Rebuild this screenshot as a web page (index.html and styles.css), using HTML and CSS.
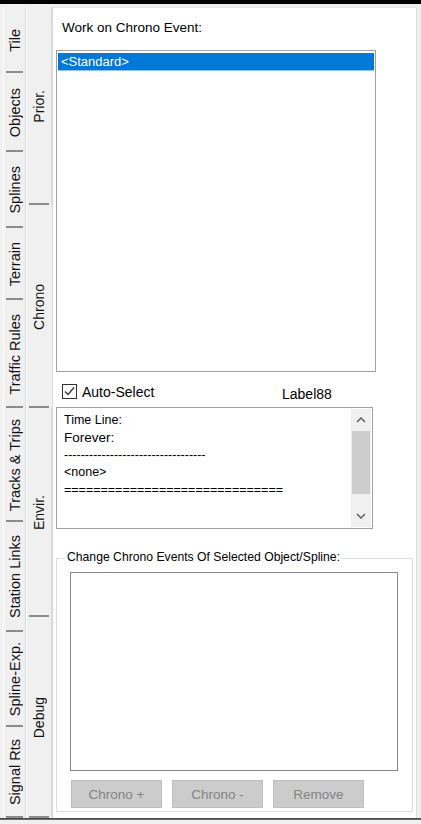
FILE: index.html
```html
<!DOCTYPE html>
<html>
<head>
<meta charset="utf-8">
<link rel="stylesheet" href="styles.css">
</head>
<body>
<div class="topbar"></div>
<div class="window">
  <div class="tabs outer">
    <div class="tab o1"><span>Tile</span></div>
    <div class="tab o2"><span>Objects</span></div>
    <div class="tab o3"><span>Splines</span></div>
    <div class="tab o4"><span>Terrain</span></div>
    <div class="tab o5"><span>Traffic Rules</span></div>
    <div class="tab o6"><span>Tracks &amp; Trips</span></div>
    <div class="tab o7"><span>Station Links</span></div>
    <div class="tab o8"><span>Spline-Exp.</span></div>
    <div class="tab o9 last"><span>Signal Rts</span></div>
  </div>
  <div class="tabs inner">
    <div class="tab i1"><span>Prior.</span></div>
    <div class="tab i2 selected"><span>Chrono</span></div>
    <div class="tab i3"><span>Envir.</span></div>
    <div class="tab i4 last"><span>Debug</span></div>
  </div>
  <div class="panel">
    <div class="caption">Work on Chrono Event:</div>
    <div class="listbox">
      <div class="item selected">&lt;Standard&gt;</div>
    </div>
    <div class="checkrow">
      <div class="check">
        <span class="checkbox"><svg width="13" height="13" viewBox="0 0 13 13"><path d="M2 6.5 L5 9.5 L11 2.5" fill="none" stroke="#333" stroke-width="1.3"/></svg></span>
        <span class="chk-label">Auto-Select</span>
      </div>
      <span class="label88">Label88</span>
    </div>
    <div class="memo">
      <div class="memo-text">
        <div>Time Line:</div>
        <div class="wide">Forever:</div>
        <div>----------------------------------</div>
        <div>&lt;none&gt;</div>
        <div>==============================</div>
      </div>
      <div class="scrollbar">
        <div class="sb-btn"><svg width="10" height="6" viewBox="0 0 10 6"><path d="M1 5 L5 1 L9 5" fill="none" stroke="#606060" stroke-width="1.5"/></svg></div>
        <div class="sb-track"><div class="sb-thumb"></div></div>
        <div class="sb-btn"><svg width="10" height="6" viewBox="0 0 10 6"><path d="M1 1 L5 5 L9 1" fill="none" stroke="#606060" stroke-width="1.5"/></svg></div>
      </div>
    </div>
    <fieldset class="group">
      <legend>Change Chrono Events Of Selected Object/Spline:</legend>
      <div class="listbox2"></div>
      <div class="buttons">
        <button class="btn" disabled>Chrono +</button>
        <button class="btn" disabled>Chrono -</button>
        <button class="btn" disabled>Remove</button>
      </div>
    </fieldset>
  </div>
</div>
<div class="bottombar"></div>
</body>
</html>
```
FILE: styles.css
```css
html, body {
  margin: 0;
  padding: 0;
}
body {
  background: #f0f0f0;
  font-family: "Liberation Sans", Arial, sans-serif;
  font-size: 12.5px;
  color: #000;
  width: 421px;
  height: 824px;
  overflow: hidden;
}
.topbar {
  height: 4px;
  background: #000;
}
.window {
  display: flex;
  padding: 3px 0 0 3px;
  height: 811px;
}
.tabs {
  display: flex;
  flex-direction: column;
  flex: none;
}
.tabs.outer {
  width: 23px;
}
.tabs.inner {
  width: 26px;
}
.tab {
  flex: none;
  display: flex;
  align-items: center;
  justify-content: center;
  box-sizing: border-box;
  border-left: 1px solid #fdfdfd;
  border-right: 1px solid #dadada;
  background: linear-gradient(#8c8c8c, #8c8c8c) no-repeat center bottom / 17px 2px, #f0f0f0;
  font-size: 14.5px;
  color: #111;
}
.tabs.inner .tab {
  background: linear-gradient(#8c8c8c, #8c8c8c) no-repeat center bottom / 20px 2px, #f0f0f0;
  font-size: 14px;
}
.tab.last {
  background: linear-gradient(#8c8c8c, #8c8c8c) no-repeat center bottom / 17px 2px, #f0f0f0;
}
.tab span {
  writing-mode: vertical-rl;
  transform: rotate(180deg);
  white-space: nowrap;
}
.tab.selected {
  border-right-color: #f0f0f0;
}
.o1 { height: 66px; }
.o2 { height: 79px; }
.o3 { height: 76px; }
.o4 { height: 72px; }
.o5 { height: 108px; }
.o6 { height: 114px; }
.o7 { height: 110px; }
.o8 { height: 95px; }
.o9 { height: 91px; }
.i1 { height: 198px; }
.i2 { height: 203px; }
.i3 { height: 209px; }
.i4 { height: 201px; }

.panel {
  flex: none;
  width: 365px;
  box-sizing: border-box;
  background: #fff;
  border-left: 1px solid #d9d9d9;
  border-top: 1px solid #e6e6e6;
  border-right: 1px solid #dcdcdc;
  padding: 12px 0 0 3px;
  display: flex;
  flex-direction: column;
}
.caption {
  height: 16px;
  line-height: 16px;
  padding-left: 6px;
  font-size: 13.5px;
}
.listbox {
  margin-top: 14px;
  width: 320px;
  height: 322px;
  box-sizing: border-box;
  border: 1px solid #a0a0a0;
  padding: 2px 1px;
}
.item {
  height: 18px;
  line-height: 18px;
  padding-left: 3px;
  font-size: 13px;
}
.item.selected {
  background: #0078d7;
  color: #fff;
  border-bottom: 1px solid #8fc3ee;
  height: 17px;
}
.checkrow {
  margin-top: 9px;
  display: grid;
  grid-template-columns: 226px auto;
  align-items: center;
  height: 16px;
  font-size: 14px;
}
.check {
  display: flex;
  align-items: center;
  padding-left: 6px;
}
.checkbox {
  width: 15px;
  height: 15px;
  box-sizing: border-box;
  border: 1px solid #333;
  background: #fff;
  display: flex;
  align-items: center;
  justify-content: center;
}
.chk-label {
  margin-left: 5px;
}
.label88 {
  padding-top: 5px;
}
.memo {
  margin-top: 10px;
  width: 317px;
  height: 122px;
  box-sizing: border-box;
  border: 1px solid #a0a0a0;
  display: flex;
}
.memo-text {
  flex: 1;
  padding: 4px 0 0 7px;
  line-height: 17.4px;
  overflow: hidden;
  white-space: nowrap;
}
.memo-text .wide {
  font-size: 13.5px;
}
.scrollbar {
  flex: none;
  width: 20px;
  margin: 1px 1px 1px 0;
  background: #f0f0f0;
  display: flex;
  flex-direction: column;
}
.sb-btn {
  height: 22px;
  display: flex;
  align-items: center;
  justify-content: center;
}
.sb-track {
  flex: 1;
}
.sb-thumb {
  height: 63px;
  margin: 0 1px;
  background: #cdcdcd;
}
.group {
  margin: 20px 0 0 0;
  padding: 0 0 3px 0;
  width: 357px;
  box-sizing: border-box;
  border: 1px solid #dcdcdc;
  min-width: 0;
}
.group legend {
  margin-left: 8px;
  padding: 0 2px 2px 2px;
  line-height: 16px;
  font-size: 12.2px;
}
.listbox2 {
  margin: 5px 0 0 13px;
  width: 328px;
  height: 199px;
  box-sizing: border-box;
  border: 1px solid #828790;
}
.buttons {
  display: flex;
  gap: 10px;
  margin: 9px 0 0 14px;
}
.btn {
  width: 91px;
  height: 28px;
  box-sizing: border-box;
  background: #cccccc;
  border: 1px solid #bfbfbf;
  color: #838383;
  font-family: "Liberation Sans", Arial, sans-serif;
  font-size: 13.5px;
  padding: 0;
}
.bottombar {
  height: 2px;
  background: linear-gradient(#3a3a3a, #7a7a7a);
}
```
